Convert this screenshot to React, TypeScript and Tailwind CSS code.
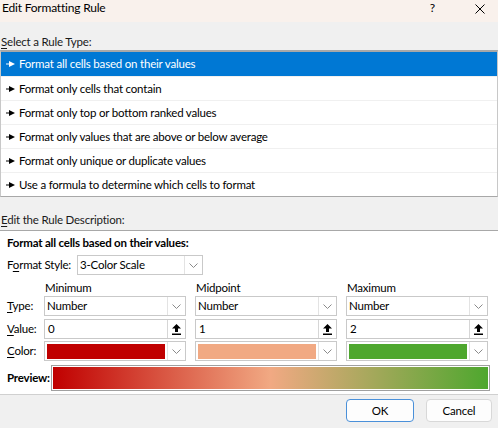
import React from 'react';

const ruleTypes = [
  'Format all cells based on their values',
  'Format only cells that contain',
  'Format only top or bottom ranked values',
  'Format only values that are above or below average',
  'Format only unique or duplicate values',
  'Use a formula to determine which cells to format',
];

const columns = [
  { label: 'Minimum', value: '0', color: '#c00000' },
  { label: 'Midpoint', value: '1', color: '#f1a983' },
  { label: 'Maximum', value: '2', color: '#4ea72e' },
];

const Pointer: React.FC<{ light?: boolean }> = ({ light }) => (
  <svg width="9" height="6" viewBox="0 0 9 6" className="shrink-0">
    <path d="M0 2.5h4V3.5H0z" fill={light ? '#fff' : '#000'} />
    <path d="M3 0l6 3-6 3z" fill={light ? '#fff' : '#000'} />
  </svg>
);

const Chevron = () => (
  <div className="flex h-full w-[18px] shrink-0 items-center justify-center border-l border-[#e3e3e3]">
    <svg width="9" height="5" viewBox="0 0 9 5">
      <path d="M0.5 0.5l4 4 4-4" fill="none" stroke="#8a8a8a" strokeWidth="1" />
    </svg>
  </div>
);

const UploadIcon = () => (
  <div className="flex h-full w-[18px] shrink-0 items-center justify-center border-l border-[#d6d6d6]">
    <svg width="9" height="11" viewBox="0 0 9 11">
      <path d="M4.5 0L9 4.5H6V8H3V4.5H0z" fill="#000" />
      <path d="M0 9.5h9V11H0z" fill="#000" />
    </svg>
  </div>
);

const Select: React.FC<{ text: string; className?: string }> = ({ text, className = '' }) => (
  <div className={`flex h-[20px] shrink-0 items-center border border-[#c9c9c9] bg-white ${className}`}>
    <span className="flex-1 whitespace-nowrap pl-[2px] leading-none">{text}</span>
    <Chevron />
  </div>
);

const Accel: React.FC<{ pre?: string; key_: string; post: string }> = ({ pre = '', key_, post }) => (
  <span className="whitespace-nowrap">
    {pre}
    <span className="underline underline-offset-2">{key_}</span>
    {post}
  </span>
);

export default function App() {
  return (
    <div
      className="flex h-[428px] w-[498px] flex-col overflow-hidden bg-[#f0f0f0] text-[11.5px] tracking-[-0.2px] text-black"
      style={{ fontFamily: '"Segoe UI", Lato, "Noto Sans", sans-serif' }}
    >
      <div className="flex h-[22px] shrink-0 items-start bg-[#f9f1ec] pt-[1px]">
        <span className="pl-[2px] text-[12px] leading-[14px]">Edit Formatting Rule</span>
        <span className="ml-auto text-[12px] leading-[14px]">?</span>
        <svg width="10" height="10" viewBox="0 0 10 10" className="ml-[40px] mr-[13px] mt-[3px]">
          <path d="M0.5 0.5l9 9M9.5 0.5l-9 9" stroke="#000" strokeWidth="1" />
        </svg>
      </div>

      <div className="mt-[13px] pl-[1px] leading-[14px] text-[#1a1a1a]">
        <Accel key_="S" post="elect a Rule Type:" />
      </div>

      <div className="mt-[1px] border-x border-t-2 border-b border-[#a8a8a8] border-x-[#c8c8c8] bg-white">
        {ruleTypes.map((rule, i) => (
          <div
            key={rule}
            className={`flex h-[24px] items-center gap-[4px] pl-[5px] ${
              i === 0 ? 'bg-[#0078d4] text-white' : 'border-t border-[#f0f0f0]'
            }`}
          >
            <Pointer light={i === 0} />
            <span className="whitespace-nowrap leading-none">{rule}</span>
          </div>
        ))}
      </div>

      <div className="mt-[16px] pl-[1px] leading-[14px] text-[#1a1a1a]">
        <Accel key_="E" post="dit the Rule Description:" />
      </div>

      <div className="mt-[3px] flex h-[165px] shrink-0 flex-col border-y border-y-[#a8a8a8] border-b-[#d0d0d0] bg-white px-[7px]">
        <div className="mt-[5px] whitespace-nowrap font-bold leading-[14px]">Format all cells based on their values:</div>

        <div className="mt-[5px] flex items-center">
          <span className="w-[70px] shrink-0">
            <Accel pre="F" key_="o" post="rmat Style:" />
          </span>
          <Select text="3-Color Scale" className="w-[126px]" />
        </div>

        <div className="mt-[6px] flex leading-[14px]">
          {columns.map(c => (
            <span key={c.label} className={`w-[151px] shrink-0 pl-[1px] ${c.label === 'Minimum' ? 'ml-[37px]' : ''}`}>
              {c.label}
            </span>
          ))}
        </div>

        <div className="mt-[1px] flex items-center">
          <span className="w-[37px] shrink-0">
            <Accel key_="T" post="ype:" />
          </span>
          <div className="flex gap-[9px]">
            {columns.map(c => (
              <Select key={c.label} text="Number" className="w-[142px]" />
            ))}
          </div>
        </div>

        <div className="mt-[3px] flex items-center">
          <span className="w-[37px] shrink-0">
            <Accel key_="V" post="alue:" />
          </span>
          <div className="flex gap-[9px]">
            {columns.map(c => (
              <div key={c.label} className="flex h-[20px] w-[142px] shrink-0 items-center border border-[#c9c9c9] bg-white">
                <span className="flex-1 pl-[3px] leading-none">{c.value}</span>
                <UploadIcon />
              </div>
            ))}
          </div>
        </div>

        <div className="mt-[2px] flex items-center">
          <span className="w-[37px] shrink-0">
            <Accel key_="C" post="olor:" />
          </span>
          <div className="flex gap-[9px]">
            {columns.map(c => (
              <div key={c.label} className="flex h-[20px] w-[142px] shrink-0 items-center border border-[#c9c9c9] bg-white">
                <div className="mx-[2px] h-[15px] flex-1" style={{ backgroundColor: c.color }} />
                <Chevron />
              </div>
            ))}
          </div>
        </div>

        <div className="mt-[4px] flex items-center">
          <span className="w-[44px] shrink-0 whitespace-nowrap font-bold">Preview:</span>
          <div className="h-[26px] w-[439px] shrink-0 border border-[#a0a0a0] p-[1px]">
            <div className="h-full w-full bg-[linear-gradient(to_right,#c00000,#f1a983_50%,#4ea72e)]" />
          </div>
        </div>
      </div>

      <div className="flex justify-end gap-[12px] pr-[6px] pt-[4px]">
        <button className="h-[23px] w-[68px] rounded-[4px] border border-[#4a90d9] bg-[#fdfdfd] leading-none">
          OK
        </button>
        <button className="h-[23px] w-[66px] rounded-[4px] border border-[#d8d8d8] bg-[#fdfdfd] leading-none">
          Cancel
        </button>
      </div>
    </div>
  );
}
